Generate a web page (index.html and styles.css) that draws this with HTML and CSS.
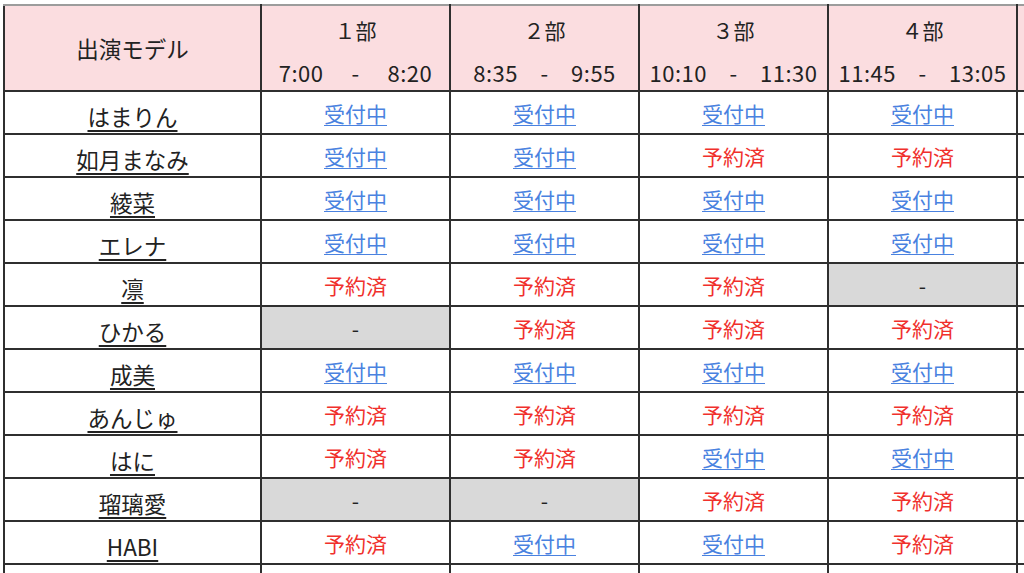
FILE: index.html
```html
<!DOCTYPE html>
<html lang="ja">
<head>
<meta charset="utf-8">
<link rel="stylesheet" href="styles.css">
</head>
<body>
<div class="wrap">
<table class="sched">
<colgroup>
<col class="c-name"><col class="c-slot"><col class="c-slot"><col class="c-slot"><col class="c-slot"><col class="c-slot">
</colgroup>
<thead>
<tr>
<th class="h-name">出演モデル</th>
<th><div class="part">１部</div><div class="time">7:00　 -　 8:20</div></th>
<th><div class="part">２部</div><div class="time">8:35　-　9:55</div></th>
<th><div class="part">３部</div><div class="time">10:10　-　11:30</div></th>
<th><div class="part">４部</div><div class="time">11:45　-　13:05</div></th>
<th></th>
</tr>
</thead>
<tbody>
<tr><td class="name"><a>はまりん</a></td><td class="open"><a>受付中</a></td><td class="open"><a>受付中</a></td><td class="open"><a>受付中</a></td><td class="open"><a>受付中</a></td><td></td></tr>
<tr><td class="name"><a>如月まなみ</a></td><td class="open"><a>受付中</a></td><td class="open"><a>受付中</a></td><td class="full">予約済</td><td class="full">予約済</td><td></td></tr>
<tr><td class="name"><a>綾菜</a></td><td class="open"><a>受付中</a></td><td class="open"><a>受付中</a></td><td class="open"><a>受付中</a></td><td class="open"><a>受付中</a></td><td></td></tr>
<tr><td class="name"><a>エレナ</a></td><td class="open"><a>受付中</a></td><td class="open"><a>受付中</a></td><td class="open"><a>受付中</a></td><td class="open"><a>受付中</a></td><td></td></tr>
<tr><td class="name"><a>凛</a></td><td class="full">予約済</td><td class="full">予約済</td><td class="full">予約済</td><td class="none">-</td><td></td></tr>
<tr><td class="name"><a>ひかる</a></td><td class="none">-</td><td class="full">予約済</td><td class="full">予約済</td><td class="full">予約済</td><td></td></tr>
<tr><td class="name"><a>成美</a></td><td class="open"><a>受付中</a></td><td class="open"><a>受付中</a></td><td class="open"><a>受付中</a></td><td class="open"><a>受付中</a></td><td></td></tr>
<tr><td class="name"><a>あんじゅ</a></td><td class="full">予約済</td><td class="full">予約済</td><td class="full">予約済</td><td class="full">予約済</td><td></td></tr>
<tr><td class="name"><a>はに</a></td><td class="full">予約済</td><td class="full">予約済</td><td class="open"><a>受付中</a></td><td class="open"><a>受付中</a></td><td></td></tr>
<tr><td class="name"><a>瑠璃愛</a></td><td class="none">-</td><td class="none">-</td><td class="full">予約済</td><td class="full">予約済</td><td></td></tr>
<tr><td class="name"><a>HABI</a></td><td class="full">予約済</td><td class="open"><a>受付中</a></td><td class="open"><a>受付中</a></td><td class="full">予約済</td><td></td></tr>
<tr><td class="name"></td><td></td><td></td><td></td><td></td><td></td></tr>
</tbody>
</table>
</div>
</body>
</html>
```
FILE: styles.css
```css
html, body {
  margin: 0;
  padding: 0;
  background: #fff;
  overflow: hidden;
  width: 1024px;
  height: 573px;
}
body {
  font-family: "Noto Sans CJK JP", "Noto Sans", sans-serif;
  color: #222;
}
.wrap {
  padding: 4px 0 0 3px;
}
.sched {
  border-collapse: collapse;
  table-layout: fixed;
  width: 1202px;
}
.c-name { width: 257px; }
.c-slot { width: 189px; }
.sched th, .sched td {
  border: 2px solid #2f2f2f;
  padding: 0;
  text-align: center;
  overflow: hidden;
  white-space: nowrap;
}
.sched th {
  background: #fbdde0;
  border-top-color: #9c9c9c;
  font-weight: normal;
  height: 84px;
  font-size: 21px;
}
.part {
  line-height: 26px;
  padding-top: 5px;
  height: 42px;
  box-sizing: border-box;
}
.time {
  font-size: 22px;
  line-height: 26px;
  padding-top: 5px;
  letter-spacing: 0.5px;
}
.sched .h-name {
  font-size: 22.5px;
  line-height: 28px;
}
.sched td {
  height: 41px;
  font-size: 21px;
  line-height: 26px;
}
.name {
  vertical-align: bottom;
}
.name a {
  display: inline-block;
  font-size: 22.5px;
  line-height: 28px;
  color: #222;
  text-decoration: underline;
  text-decoration-thickness: 2px;
  text-underline-offset: 4px;
  margin-bottom: 3px;
}
.open a {
  color: #4a82e0;
  text-decoration: underline;
  text-decoration-thickness: 1px;
  text-underline-offset: 3px;
}
.full { color: #f0302c; }
.none {
  background: #d9d9d9;
  color: #222;
}
```
